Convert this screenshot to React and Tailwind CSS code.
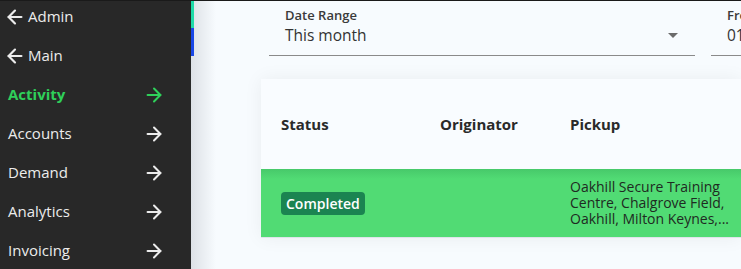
import React from 'react';
import { ArrowLeft, ArrowRight } from 'lucide-react';

const navItems = [
  { label: 'Admin', back: true },
  { label: 'Main', back: true },
  { label: 'Activity', active: true },
  { label: 'Accounts' },
  { label: 'Demand' },
  { label: 'Analytics' },
  { label: 'Invoicing' },
];

function Sidebar() {
  return (
    <aside className="relative w-[191px] shrink-0 bg-[#282828]">
      <div className="-mt-[4px]">
        {navItems.map((item) => (
          <div
            key={item.label}
            className={`flex h-[39px] items-center pl-2 pr-[26px] text-[15px] ${item.active ? 'font-bold text-[#2fd05a]' : 'text-[#ececec]'}`}
          >
            {item.back && <ArrowLeft size={22} strokeWidth={2.4} className="-ml-[4px] mr-[2px]" />}
            <span className="flex-1">{item.label}</span>
            {!item.back && <ArrowRight size={22} strokeWidth={2.2} />}
          </div>
        ))}
      </div>
      <div className="absolute right-[-3px] top-0 h-[27px] w-[3px] bg-[#1fdba8]" />
      <div className="absolute right-[-3px] top-[27px] h-[28px] w-[3px] bg-[#1947e6]" />
    </aside>
  );
}

function DateFields() {
  return (
    <div className="ml-[8px] flex gap-4">
      <div className="w-[426px] shrink-0 border-b border-[#8a8a8a] pb-[8px] pl-4 pt-[6px]">
        <div className="text-[13px] font-semibold leading-[17px] text-[#3a3a3a]">Date Range</div>
        <div className="flex items-center justify-between pr-[17px]">
          <span className="text-[15.5px] leading-[23px] text-[#333]">This month</span>
          <span className="h-0 w-0 border-x-[5px] border-t-[5px] border-x-transparent border-t-[#6b6b6b]" />
        </div>
      </div>
      <div className="w-[200px] shrink-0 border-b border-[#8a8a8a] pb-[8px] pl-4 pt-[6px]">
        <div className="text-[13px] font-semibold leading-[17px] text-[#3a3a3a]">From</div>
        <div className="text-[15.5px] leading-[23px] text-[#333]">01/10/2024</div>
      </div>
    </div>
  );
}

function ActivityTable() {
  return (
    <div className="mt-[23px] overflow-hidden bg-[#f9fcff] shadow-[0_0_18px_rgba(0,0,0,0.06)]">
      <div className="flex h-[90px] items-center text-[15px] font-bold text-[#2a2a2a]">
        <div className="w-[179px] shrink-0 pl-5">Status</div>
        <div className="w-[130px] shrink-0">Originator</div>
        <div>Pickup</div>
      </div>
      <div className="flex h-[69px] items-center border-b border-[#dfe4ea] bg-[#51db74] bg-[linear-gradient(to_bottom,#47c96a,#51db74_10px)]">
        <div className="w-[179px] shrink-0 pl-5">
          <span className="rounded-[4px] bg-[#1b8451] px-[5px] py-[2px] text-[14px] font-semibold text-white">Completed</span>
        </div>
        <div className="w-[130px] shrink-0" />
        <div className="w-[172px] shrink-0 text-[14px] leading-[16px] text-[#1f2a22]">
          Oakhill Secure Training Centre, Chalgrove Field, Oakhill, Milton Keynes,...
        </div>
      </div>
    </div>
  );
}

export default function App() {
  return (
    <div className="flex h-[269px] w-[741px] overflow-hidden border-t border-[#1a1a1a] font-['Open_Sans',sans-serif]">
      <Sidebar />
      <main className="min-w-0 flex-1 overflow-hidden bg-[#f7fbfe] bg-[linear-gradient(to_right,#dde1e6,#f7fbfe_25px)] pl-[70px]">
        <DateFields />
        <ActivityTable />
      </main>
    </div>
  );
}
